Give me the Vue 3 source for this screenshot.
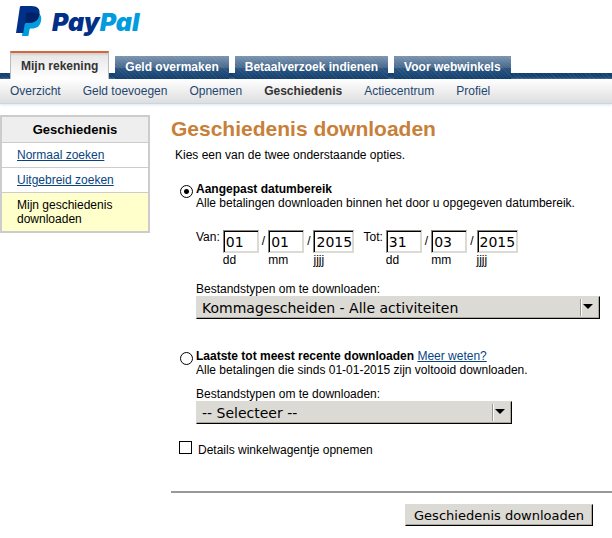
<script setup>
import { reactive, ref } from 'vue'

const tabs = ['Mijn rekening', 'Geld overmaken', 'Betaalverzoek indienen', 'Voor webwinkels']
const links = ['Overzicht', 'Geld toevoegen', 'Opnemen', 'Geschiedenis', 'Actiecentrum', 'Profiel']

const dates = reactive([
  { id: 'from', label: 'Van:', dd: '01', mm: '01', jjjj: '2015' },
  { id: 'to', label: 'Tot:', dd: '31', mm: '03', jjjj: '2015' },
])
const parts = ['dd', 'mm', 'jjjj']

const range = ref('custom')
const customType = ref('Kommagescheiden - Alle activiteiten')
const recentType = ref('-- Selecteer --')
const details = ref(false)
</script>

<template>
  <div class="page">
    <header>
      <a class="logo" href="#" aria-label="PayPal">
        <svg class="logo-mark" width="26" height="31" viewBox="0 0 26 31" aria-hidden="true">
          <path fill="#009cde" d="M22 6.500C25 8.500 25.800 11.500 24.900 15.500C23.700 20.500 20.500 22.500 16 22.500H14.800Q13.700 22.500 13.500 23.700L12.400 30H6L9 8Z" />
          <path fill="#003087" d="M5 0H15.500C21.500 0 24.300 3 23.500 8C22.500 14 19 16.800 13.500 16.800H10.500Q9 16.800 8.700 18.300L7.200 27H0L3.900 1Q4.100 0 5 0Z" />
          <path fill="#012169" d="M23.400 8C22.500 14 19 16.800 13.500 16.800H10.500Q9.200 16.800 8.800 17.900L10.200 8.300Q10.500 6.500 12 6.500H19Q22 6.500 23.400 8Z" />
        </svg>
        <span class="logo-text">Pay<span>Pal</span></span>
      </a>
      <nav class="tabs">
        <a v-for="(tab, i) in tabs" :key="tab" href="#" :class="{ active: i === 0 }">{{ tab }}</a>
      </nav>
      <nav class="subnav">
        <a v-for="link in links" :key="link" href="#" :class="{ current: link === 'Geschiedenis' }">{{ link }}</a>
      </nav>
    </header>

    <div class="content">
      <aside>
        <h2>Geschiedenis</h2>
        <ul>
          <li><a href="#">Normaal zoeken</a></li>
          <li><a href="#">Uitgebreid zoeken</a></li>
          <li class="selected">Mijn geschiedenis downloaden</li>
        </ul>
      </aside>

      <main>
        <h1>Geschiedenis downloaden</h1>
        <p class="intro">Kies een van de twee onderstaande opties.</p>

        <form @submit.prevent>
          <section class="option">
            <input id="custom" v-model="range" type="radio" name="range" value="custom" />
            <div class="option-body">
              <label class="option-title" for="custom">Aangepast datumbereik</label>
              <p>Alle betalingen downloaden binnen het door u opgegeven datumbereik.</p>
              <div class="dates">
                <div v-for="date in dates" :key="date.id" class="date">
                  <span>{{ date.label }}</span>
                  <template v-for="part in parts" :key="part">
                    <span v-if="part !== 'dd'" class="slash">/</span>
                    <div class="field" :class="part">
                      <input :id="date.id + part" v-model="date[part]" type="text" :maxlength="part.length" />
                      <label :for="date.id + part">{{ part }}</label>
                    </div>
                  </template>
                </div>
              </div>
              <label class="type-label" for="customType">Bestandstypen om te downloaden:</label>
              <div class="select wide">
                <select id="customType" v-model="customType">
                  <option>Kommagescheiden - Alle activiteiten</option>
                </select>
              </div>
            </div>
          </section>

          <section class="option recent">
            <input id="recent" v-model="range" type="radio" name="range" value="recent" />
            <div class="option-body">
              <label class="option-title" for="recent">Laatste tot meest recente downloaden</label>
              {{ ' ' }}<a href="#">Meer weten?</a>
              <p>Alle betalingen die sinds 01-01-2015 zijn voltooid downloaden.</p>
              <label class="type-label" for="recentType">Bestandstypen om te downloaden:</label>
              <div class="select">
                <select id="recentType" v-model="recentType">
                  <option>-- Selecteer --</option>
                </select>
              </div>
            </div>
          </section>

          <div class="details">
            <input id="details" v-model="details" type="checkbox" />
            <label for="details">Details winkelwagentje opnemen</label>
          </div>

          <div class="actions">
            <button type="submit">Geschiedenis downloaden</button>
          </div>
        </form>
      </main>
    </div>
  </div>
</template>

<style>
body {
  margin: 0;
  background: #fff;
}
</style>

<style scoped>
.page {
  font: 12px/14px "Liberation Sans", Arial, sans-serif;
  color: #000;
}

h1,
h2,
p,
ul {
  margin: 0;
  padding: 0;
}

a {
  color: #084482;
}

.logo {
  display: flex;
  align-items: flex-start;
  height: 45px;
  padding: 6px 0 0 16px;
  box-sizing: border-box;
  text-decoration: none;
}

.logo-text {
  padding-left: 10px;
  font: italic 900 25px/32px Inter, sans-serif;
  color: #003087;
}

.logo-text span {
  color: #009cde;
}

.tabs {
  display: flex;
  align-items: flex-end;
  gap: 6px;
  height: 34px;
  padding-left: 10px;
  background:
    repeating-linear-gradient(45deg, rgba(255, 255, 255, .06) 0 1px, transparent 1px 3px),
    linear-gradient(#0f3d6e, #1c4774);
  background-size: 100% 6px;
  background-position: bottom;
  background-repeat: no-repeat;
}

.tabs a {
  height: 23px;
  padding: 0 10px;
  box-sizing: border-box;
  line-height: 22px;
  font-weight: bold;
  white-space: nowrap;
  text-decoration: none;
  color: #fff;
  background:
    repeating-linear-gradient(45deg, rgba(255, 255, 255, .06) 0 1px, transparent 1px 3px),
    linear-gradient(#7c95b0, #47698d 50%, #2b5580 51%, #123f6f);
}

.tabs a.active {
  height: 28px;
  line-height: 26px;
  color: #333;
  border: 1px solid #bbb;
  border-top: 2px solid #d9653b;
  border-bottom: 0;
  background: linear-gradient(#ccc, #e8e8e8 3px, #fff);
}

.subnav {
  display: flex;
  gap: 22px;
  height: 24px;
  padding-left: 10px;
  line-height: 24px;
  white-space: nowrap;
  background: linear-gradient(#fff, #dedede);
  border-bottom: 1px solid #c9d6e4;
  box-shadow: 0 1px 3px #dbe5f0;
}

.subnav a {
  color: #1f466f;
  text-decoration: none;
}

.subnav a.current {
  font-weight: bold;
  color: #333;
}

.content {
  display: flex;
  gap: 21px;
  align-items: flex-start;
  padding-top: 11px;
}

aside {
  flex: none;
  width: 150px;
  box-sizing: border-box;
  border: 2px solid #ccc;
}

aside h2 {
  font-size: 13px;
  line-height: 25px;
  text-align: center;
  background: #eee;
}

aside ul {
  list-style: none;
}

aside li {
  padding: 5px 15px;
  border-top: 1px solid #ccc;
}

aside .selected {
  background: #ffc;
}

main {
  flex: 1;
  min-width: 0;
}

h1 {
  font-size: 21px;
  line-height: 28px;
  color: #c88039;
}

.intro {
  padding: 5px 4px 20px;
}

.option {
  display: flex;
  gap: 3px;
  padding: 0 12px 0 9px;
}

.option-body {
  flex: 1;
  min-width: 0;
}

.option-title {
  font-weight: bold;
}

input[type="radio"],
input[type="checkbox"] {
  appearance: none;
  flex: none;
  width: 13px;
  height: 13px;
  margin: 0;
  border: 1px solid #000;
  background: #fff;
}

input[type="radio"] {
  margin-top: 3px;
  border-radius: 50%;
}

input[type="radio"]:checked {
  background: radial-gradient(circle, #000 2px, #fff 3px);
}

input[type="checkbox"]:checked {
  background: #000;
  box-shadow: inset 0 0 0 2px #fff;
}

.dates {
  display: flex;
  gap: 9px;
  padding: 20px 0 15px;
}

.date {
  display: flex;
  gap: 3px;
}

.slash {
  padding-top: 4px;
}

.field {
  width: 36px;
}

.field.jjjj {
  width: 41px;
}

.field label {
  display: block;
}

.field input {
  display: block;
  width: 100%;
  height: 23px;
  box-sizing: border-box;
  padding: 0 0 0 2px;
  font: 14px "DejaVu Sans", sans-serif;
  color: #000;
  background: #fff;
  border: 1px solid #dcdad5;
  border-top-color: #88877f;
  border-left-color: #88877f;
  border-radius: 0;
  box-shadow: inset 1px 1px #000, inset -1px -1px #dcdad5;
}

.type-label {
  display: block;
}

.select {
  position: relative;
  max-width: 316px;
}

.select.wide {
  max-width: 404px;
}

select {
  appearance: none;
  display: block;
  width: 100%;
  height: 23px;
  padding: 0 24px 0 5px;
  font: 14px "DejaVu Sans", sans-serif;
  color: #000;
  background: #dcdad5;
  border: 1px solid #dcdad5;
  border-right-color: #000;
  border-bottom-color: #000;
  border-radius: 0;
  box-shadow: inset -1px -1px #aca899;
}

/* divider and arrow */
.select::before {
  content: "";
  position: absolute;
  top: 3px;
  right: 18px;
  width: 1px;
  height: 17px;
  background: #999;
  border-right: 1px solid #fff;
}

.select::after {
  content: "";
  position: absolute;
  top: 8px;
  right: 7px;
  border: 5px solid transparent;
  border-top-color: #000;
  border-bottom: 0;
  pointer-events: none;
}

.recent {
  padding-top: 30px;
}

.recent .type-label {
  padding-top: 10px;
}

.details {
  display: flex;
  gap: 6px;
  padding: 17px 8px 34px;
}

.details label {
  padding-top: 2px;
}

.actions {
  display: flex;
  justify-content: flex-end;
  padding: 11px 19px 0 0;
  border-top: 2px solid #999;
}

button {
  height: 22px;
  padding: 0 8px;
  font: 13px "DejaVu Sans", sans-serif;
  color: #000;
  background: #dcdad5;
  border: 1px solid #dcdad5;
  border-right-color: #000;
  border-bottom-color: #000;
  border-radius: 0;
  box-shadow: inset -1px -1px #aca899;
}
</style>
